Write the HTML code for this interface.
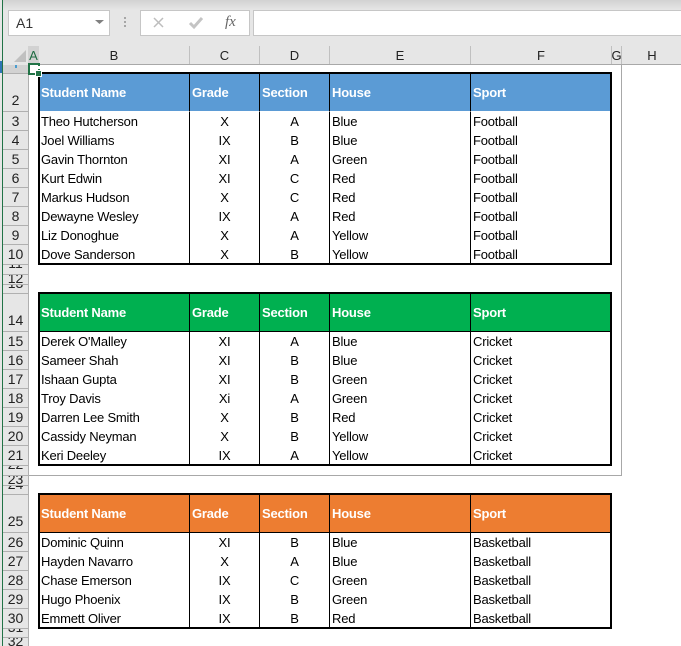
<!DOCTYPE html>
<html><head><meta charset="utf-8">
<style>
html,body{margin:0;padding:0;background:#fff}
#p{position:relative;width:681px;height:646px;overflow:hidden;background:#fff;font-family:"Liberation Sans",sans-serif;font-size:13px;color:#000}
.a{position:absolute}
.top{left:0;top:0;width:681px;height:64px;background:#e6e6e6}
.grad{left:0;top:0;width:681px;height:10px;background:linear-gradient(#d2d2d2,#e6e6e6)}
.box{background:#fff;border:1px solid #c6c6c6;box-sizing:border-box}
.ch{top:46px;height:18px;line-height:19px;text-align:center;font-size:13px;color:#222}
.cs{top:46px;width:1px;height:18px;background:#c0c0c0}
.rail{left:3px;top:64px;width:25px;height:582px;background:#e6e6e6}
.r{left:3px;width:25px;text-align:center;border-top:1px solid #b0b0b0;box-sizing:border-box;font-size:14px;color:#222;overflow:hidden}
.r span{position:relative;top:-3px}
table{position:absolute;left:38px;border-collapse:separate;border-spacing:0;table-layout:fixed;width:574px;border:2px solid #000;box-sizing:border-box;letter-spacing:-.2px}
td{padding:0 0 0 2px;height:19px;line-height:19px;white-space:nowrap;overflow:hidden;border-left:1px solid #000;box-sizing:border-box}
td:first-child{border-left:0;padding-left:1px}
td.c{text-align:center;padding-left:0}
tr.h td{height:37px;font-weight:bold;color:#fff;line-height:37px;border-bottom:1px solid #000}
tr:last-child td{height:18px;line-height:17px;padding-top:1px}
.b tr.h td{background:#5b9bd5;border-bottom-color:#fff}.g tr.h td{background:#00b050}.o tr.h td{background:#ed7d31}
</style></head><body><div id="p">
<div class="a top"></div><div class="a grad"></div>
<div class="a box" style="left:8px;top:10px;width:102px;height:26px;padding-left:7px;line-height:24px;font-size:14px;color:#333">A1</div>
<svg class="a" style="left:94px;top:19px" width="12" height="6"><path d="M1 1h9l-4.500 4z" fill="#808080"/></svg>
<div class="a" style="left:124px;top:17px;width:2px;height:2px;background:#a6a6a6;box-shadow:0 4px #a6a6a6,0 8px #a6a6a6"></div>
<div class="a box" style="left:140px;top:10px;width:110px;height:26px"></div>
<svg class="a" style="left:150px;top:14px" width="90" height="18"><path d="M4 4l9 9M13 4l-9 9" stroke="#bdbdbd" stroke-width="1.500" fill="none"/><path d="M40 9l4 4 8-9" stroke="#c4c4c4" stroke-width="3" fill="none"/></svg>
<div class="a" style="left:225px;top:14px;font:italic 15px 'Liberation Serif',serif;color:#666">fx</div>
<div class="a box" style="left:253px;top:10px;width:430px;height:26px"></div>

<div class="a" style="left:28px;top:46px;width:11px;height:18px;background:#d2d2d2"></div>
<svg class="a" style="left:14px;top:50px" width="12" height="12"><path d="M12 0v12H0z" fill="#c0c0c0"/></svg>
<div class="a ch" style="left:28px;width:11px;color:#1e6b41">A</div>
<div class="a ch" style="left:39px;width:150px">B</div>
<div class="a ch" style="left:190px;width:69px">C</div>
<div class="a ch" style="left:260px;width:69px">D</div>
<div class="a ch" style="left:330px;width:140px">E</div>
<div class="a ch" style="left:471px;width:140px">F</div>
<div class="a ch" style="left:611px;width:11px">G</div>
<div class="a ch" style="left:622px;width:60px">H</div>
<div class="a cs" style="left:189px"></div><div class="a cs" style="left:259px"></div><div class="a cs" style="left:329px"></div><div class="a cs" style="left:470px"></div><div class="a cs" style="left:611px"></div><div class="a cs" style="left:621px"></div>
<div class="a" style="left:3px;top:64px;width:678px;height:1px;background:#a8a8a8"></div>

<div class="a rail"></div>
<div class="a" style="left:28px;top:65px;width:1px;height:581px;background:#b0b0b0"></div>
<div class="a" style="left:0;top:0;width:2px;height:646px;background:#e6e6e6"></div>
<div class="a" style="left:2px;top:0;width:1px;height:646px;background:#217346"></div>
<div class="a" style="left:0;top:61px;width:2px;height:12px;background:#2f75b5"></div>
<div class="a" style="left:3px;top:65px;width:25px;height:8px;background:#d2d2d2"></div>
<div class="a" style="left:15px;top:65px;width:2px;height:3px;background:#4a9ccf"></div>

<div class="a r" style="top:73px;height:38px;line-height:53px">2</div>
<div class="a r" style="top:111px;height:19px;line-height:18px">3</div>
<div class="a r" style="top:130px;height:19px;line-height:18px">4</div>
<div class="a r" style="top:149px;height:19px;line-height:18px">5</div>
<div class="a r" style="top:168px;height:19px;line-height:18px">6</div>
<div class="a r" style="top:187px;height:19px;line-height:18px">7</div>
<div class="a r" style="top:206px;height:19px;line-height:18px">8</div>
<div class="a r" style="top:225px;height:19px;line-height:18px">9</div>
<div class="a r" style="top:244px;height:20px;line-height:18px">10</div>
<div class="a r" style="top:264px;height:10px;line-height:3px"><span>11</span></div>
<div class="a r" style="top:274px;height:10px;line-height:7px">12</div>
<div class="a r" style="top:284px;height:9px;line-height:3px"><span>13</span></div>
<div class="a r" style="top:293px;height:38px;line-height:53px">14</div>
<div class="a r" style="top:331px;height:19px;line-height:18px">15</div>
<div class="a r" style="top:350px;height:19px;line-height:18px">16</div>
<div class="a r" style="top:369px;height:19px;line-height:18px">17</div>
<div class="a r" style="top:388px;height:19px;line-height:18px">18</div>
<div class="a r" style="top:407px;height:19px;line-height:18px">19</div>
<div class="a r" style="top:426px;height:19px;line-height:18px">20</div>
<div class="a r" style="top:445px;height:20px;line-height:18px">21</div>
<div class="a r" style="top:465px;height:10px;line-height:3px"><span>22</span></div>
<div class="a r" style="top:475px;height:10px;line-height:6px">23</div>
<div class="a r" style="top:485px;height:9px;line-height:3px"><span>24</span></div>
<div class="a r" style="top:494px;height:38px;line-height:53px">25</div>
<div class="a r" style="top:532px;height:19px;line-height:18px">26</div>
<div class="a r" style="top:551px;height:19px;line-height:18px">27</div>
<div class="a r" style="top:570px;height:19px;line-height:18px">28</div>
<div class="a r" style="top:589px;height:19px;line-height:18px">29</div>
<div class="a r" style="top:608px;height:20px;line-height:18px">30</div>
<div class="a r" style="top:628px;height:9px;line-height:3px"><span>31</span></div>
<div class="a r" style="top:637px;height:9px;line-height:7px">32</div>

<div class="a" style="left:621px;top:64px;width:1px;height:412px;background:#a8a8a8"></div>
<div class="a" style="left:29px;top:475px;width:593px;height:1px;background:#a8a8a8"></div>

<table class="b" style="top:72px"><colgroup><col style="width:149px"><col style="width:70px"><col style="width:70px"><col style="width:141px"><col></colgroup>
<tr class="h"><td>Student Name</td><td>Grade</td><td>Section</td><td>House</td><td>Sport</td></tr>
<tr><td>Theo Hutcherson</td><td class="c">X</td><td class="c">A</td><td>Blue</td><td>Football</td></tr>
<tr><td>Joel Williams</td><td class="c">IX</td><td class="c">B</td><td>Blue</td><td>Football</td></tr>
<tr><td>Gavin Thornton</td><td class="c">XI</td><td class="c">A</td><td>Green</td><td>Football</td></tr>
<tr><td>Kurt Edwin</td><td class="c">XI</td><td class="c">C</td><td>Red</td><td>Football</td></tr>
<tr><td>Markus Hudson</td><td class="c">X</td><td class="c">C</td><td>Red</td><td>Football</td></tr>
<tr><td>Dewayne Wesley</td><td class="c">IX</td><td class="c">A</td><td>Red</td><td>Football</td></tr>
<tr><td>Liz Donoghue</td><td class="c">X</td><td class="c">A</td><td>Yellow</td><td>Football</td></tr>
<tr><td>Dove Sanderson</td><td class="c">X</td><td class="c">B</td><td>Yellow</td><td>Football</td></tr>
</table>

<table class="g" style="top:292px"><colgroup><col style="width:149px"><col style="width:70px"><col style="width:70px"><col style="width:141px"><col></colgroup>
<tr class="h"><td>Student Name</td><td>Grade</td><td>Section</td><td>House</td><td>Sport</td></tr>
<tr><td>Derek O'Malley</td><td class="c">XI</td><td class="c">A</td><td>Blue</td><td>Cricket</td></tr>
<tr><td>Sameer Shah</td><td class="c">XI</td><td class="c">B</td><td>Blue</td><td>Cricket</td></tr>
<tr><td>Ishaan Gupta</td><td class="c">XI</td><td class="c">B</td><td>Green</td><td>Cricket</td></tr>
<tr><td>Troy Davis</td><td class="c">Xi</td><td class="c">A</td><td>Green</td><td>Cricket</td></tr>
<tr><td>Darren Lee Smith</td><td class="c">X</td><td class="c">B</td><td>Red</td><td>Cricket</td></tr>
<tr><td>Cassidy Neyman</td><td class="c">X</td><td class="c">B</td><td>Yellow</td><td>Cricket</td></tr>
<tr><td>Keri Deeley</td><td class="c">IX</td><td class="c">A</td><td>Yellow</td><td>Cricket</td></tr>
</table>

<table class="o" style="top:493px"><colgroup><col style="width:149px"><col style="width:70px"><col style="width:70px"><col style="width:141px"><col></colgroup>
<tr class="h"><td>Student Name</td><td>Grade</td><td>Section</td><td>House</td><td>Sport</td></tr>
<tr><td>Dominic Quinn</td><td class="c">XI</td><td class="c">B</td><td>Blue</td><td>Basketball</td></tr>
<tr><td>Hayden Navarro</td><td class="c">X</td><td class="c">A</td><td>Blue</td><td>Basketball</td></tr>
<tr><td>Chase Emerson</td><td class="c">IX</td><td class="c">C</td><td>Green</td><td>Basketball</td></tr>
<tr><td>Hugo Phoenix</td><td class="c">IX</td><td class="c">B</td><td>Green</td><td>Basketball</td></tr>
<tr><td>Emmett Oliver</td><td class="c">IX</td><td class="c">B</td><td>Red</td><td>Basketball</td></tr>
</table>

<div class="a" style="left:28px;top:63px;width:12px;height:12px;border:2px solid #217346;box-sizing:border-box;background:#fff"></div>
<div class="a" style="left:38px;top:66px;width:2px;height:3px;background:#fff"></div>
<div class="a" style="left:35px;top:70px;width:7px;height:7px;background:#217346;border:1px solid #fff;box-sizing:border-box"></div>
</div></body></html>
